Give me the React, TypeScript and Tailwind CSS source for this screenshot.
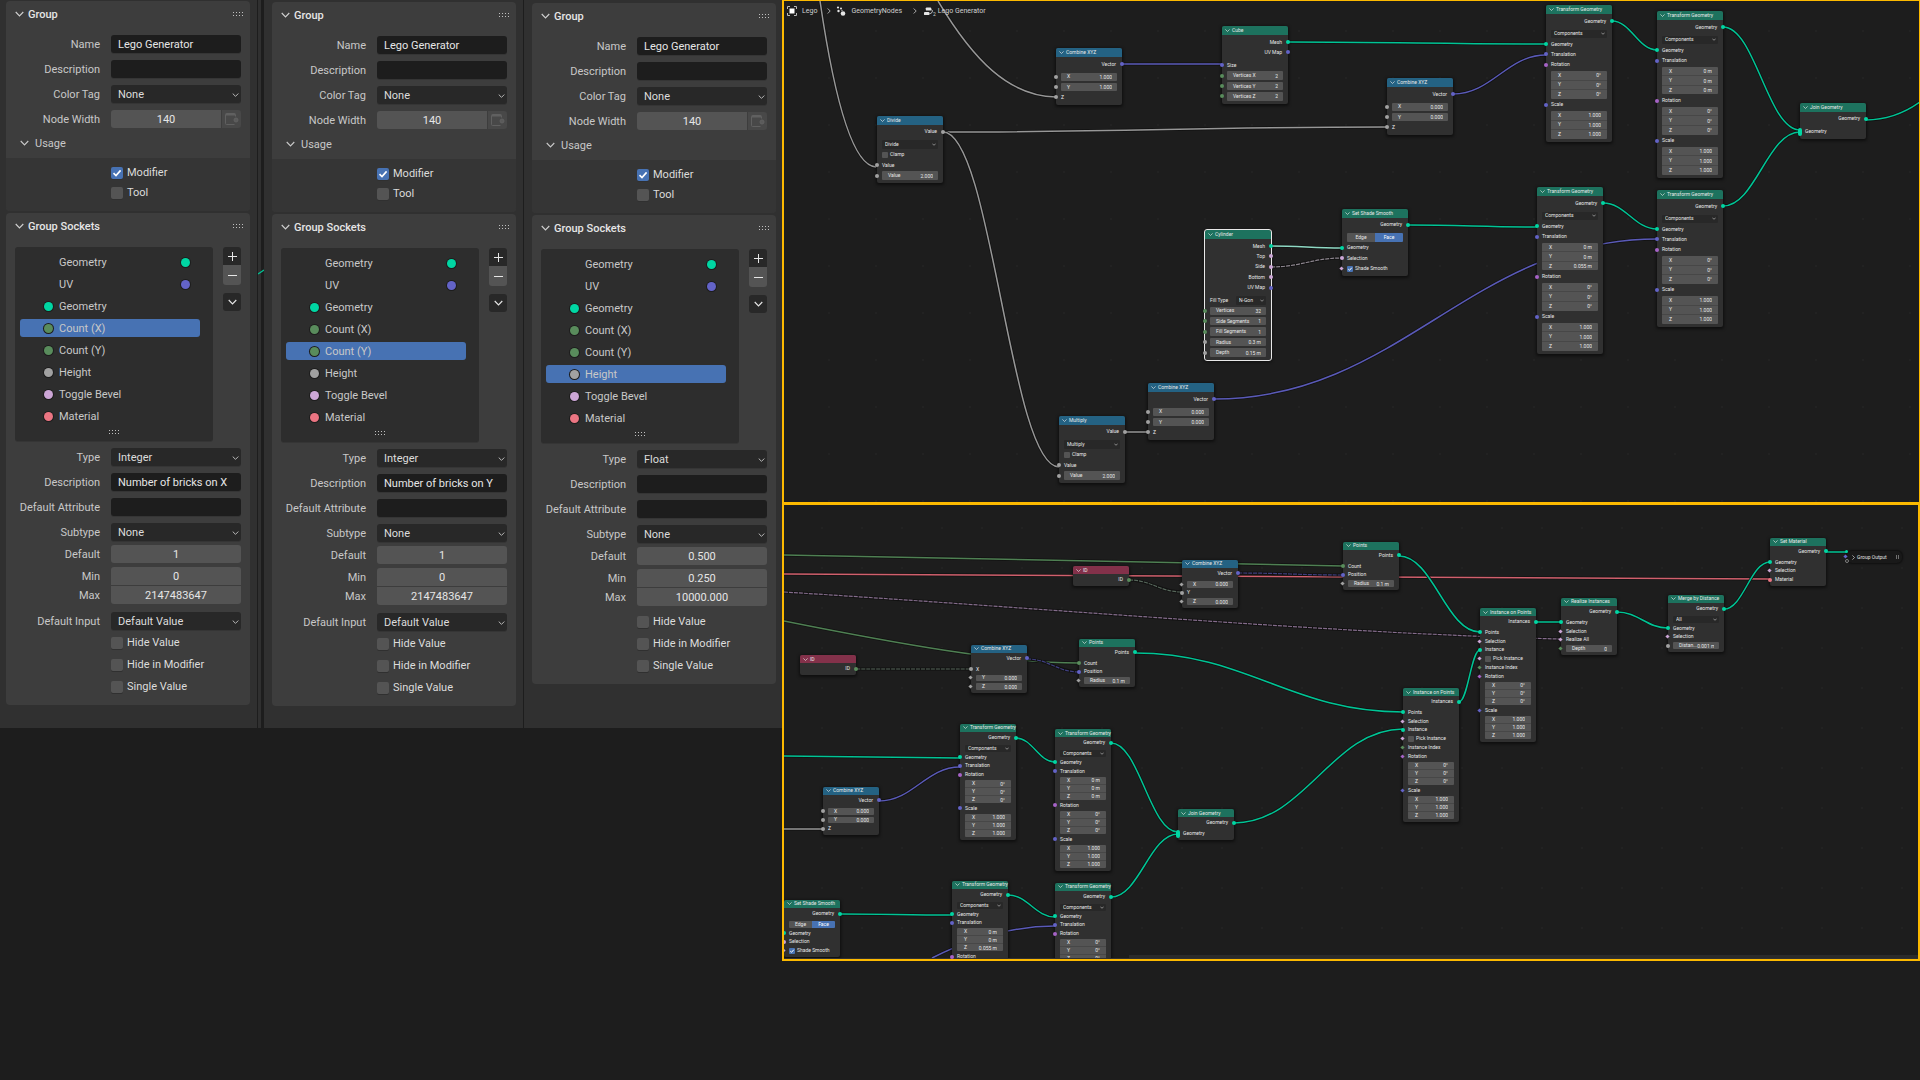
import React from "react";
import clsx from "clsx";

type Sock = "geo" | "vec" | "val" | "int" | "bool" | "rot" | "mat";
type Shape = "dot" | "diamond" | "multi";

type Row =
  | { t: "out"; label: string; s: Sock }
  | { t: "in"; label: string; s: Sock; shape?: Shape }
  | { t: "field"; label: string; value: string; s: Sock; shape?: Shape }
  | { t: "check"; label: string; on?: boolean; s?: Sock; shape?: Shape }
  | { t: "drop"; label?: string; value: string }
  | { t: "toggle" }
  | { t: "block"; values: string[] }
  | { t: "gap" };

type NodeDef = {
  title: string;
  color: "blue" | "green" | "red";
  x: number;
  y: number;
  rows: Row[];
  selected?: boolean;
};

const SOCKET_COLORS: Record<Sock, string> = {
  geo: "bg-[#00d6a3]",
  vec: "bg-[#6363c7]",
  val: "bg-[#a1a1a1]",
  int: "bg-[#598c5c]",
  bool: "bg-[#cca6d6]",
  rot: "bg-[#a663c7]",
  mat: "bg-[#eb7582]",
};

const HEADER_COLORS = {
  blue: "bg-[#246283]",
  green: "bg-[#1d725e]",
  red: "bg-[#83314a]",
};

// Row heights in node units; 140 units is the width of a node.
const UNITS = { row: 22, header: 20, top: 3, gap: 5, block: 63, bottom: 5 };

const Chevron = ({ className }: { className?: string }) => (
  <svg viewBox="0 0 10 6" className={className} fill="none" stroke="currentColor" strokeWidth="1.3">
    <path d="M0.8 0.8 L5 5 L9.2 0.8" />
  </svg>
);

const Dots = () => (
  <svg viewBox="0 0 11 5" className="w-[11px] h-[5px]" fill="#c0c0c0">
    {[0, 3, 6, 9].map((x) => (
      <React.Fragment key={x}>
        <rect x={x} y="0" width="1" height="1" />
        <rect x={x} y="3" width="1" height="1" />
      </React.Fragment>
    ))}
  </svg>
);

/* ---------- Sidebar ---------- */

const FieldRow = ({ label, children }: { label: string; children: React.ReactNode }) => (
  <label className="flex items-center gap-[11px]">
    <span className="w-[94px] shrink-0 text-right text-[#c8c8c8] whitespace-nowrap">{label}</span>
    <span className="relative flex flex-1 h-[18px]">{children}</span>
  </label>
);

const TextBox = ({ value }: { value: string }) => (
  <input
    type="text"
    defaultValue={value}
    className="w-full h-full min-w-0 rounded-[3px] bg-[#1d1d1d] px-[7px] text-[#e6e6e6] shadow-[0_1px_0_#353535] outline-none"
  />
);

const SelectBox = ({ value }: { value: string }) => (
  <>
    <select
      defaultValue={value}
      className="appearance-none w-full h-full rounded-[3px] bg-[#282828] px-[7px] text-[#dcdcdc] shadow-[0_1px_0_#353535] outline-none"
    >
      <option>{value}</option>
    </select>
    <Chevron className="absolute right-[2px] top-[8px] w-[7px] h-[4px] text-[#cfcfcf] pointer-events-none" />
  </>
);

const NumberBox = ({ value, className }: { value: string; className?: string }) => (
  <input
    type="text"
    inputMode="decimal"
    defaultValue={value}
    className={clsx("w-full h-full min-w-0 bg-[#545454] text-center text-[#e6e6e6] outline-none", className || "rounded-[3px]")}
  />
);

const CheckBox = ({ label, on }: { label: string; on?: boolean }) => (
  <label className="flex items-center gap-1 text-[#dcdcdc]">
    <span className="relative w-3 h-3">
      <input
        type="checkbox"
        defaultChecked={on}
        className="block appearance-none w-3 h-3 rounded-[2px] bg-[#545454] checked:bg-[#4772b3] shadow-[0_1px_0_#303030]"
      />
      {on && (
        <svg viewBox="0 0 12 12" className="absolute inset-0 w-3 h-3 pointer-events-none" fill="none" stroke="#fff" strokeWidth="1.6">
          <path d="M2.5 6.2 L5 8.6 L9.6 3.4" />
        </svg>
      )}
    </span>
    {label}
  </label>
);

const PanelHeader = ({ title }: { title: string }) => (
  <div className="flex items-center h-[26px] pl-[9px] pr-[6px]">
    <Chevron className="w-[9px] h-[6px] text-[#cfcfcf]" />
    <h2 className="flex-1 pl-1 font-medium text-[#e6e6e6]">{title}</h2>
    <Dots />
  </div>
);

const SOCKETS: { label: string; s: Sock; out?: boolean }[] = [
  { label: "Geometry", s: "geo", out: true },
  { label: "UV", s: "vec", out: true },
  { label: "Geometry", s: "geo" },
  { label: "Count (X)", s: "int" },
  { label: "Count (Y)", s: "int" },
  { label: "Height", s: "val" },
  { label: "Toggle Bevel", s: "bool" },
  { label: "Material", s: "mat" },
];

type SidebarProps = {
  active: string;
  type: string;
  description: string;
  range: [string, string, string];
  defaultInput?: string;
  className?: string;
};

const Sidebar = ({ active, type, description, range, defaultInput, className }: SidebarProps) => (
  <aside className={clsx("bg-[#303030] pb-[22px]", className)}>
    <section className="w-[244px] rounded-[4px] bg-[#3d3d3d] overflow-hidden">
      <PanelHeader title="Group" />
      <div className="flex flex-col gap-[7px] pt-2 pr-[9px]">
        <FieldRow label="Name"><TextBox value="Lego Generator" /></FieldRow>
        <FieldRow label="Description"><TextBox value="" /></FieldRow>
        <FieldRow label="Color Tag"><SelectBox value="None" /></FieldRow>
        <div className="relative">
          <FieldRow label="Node Width">
            <NumberBox value="140" className="rounded-l-[3px] mr-5" />
          </FieldRow>
          <button type="button" aria-label="Pick width" className="absolute right-0 top-0 w-[19px] h-[18px] rounded-r-[3px] bg-[#484848] flex items-center justify-center">
            <svg viewBox="0 0 15 14" className="w-[15px] h-[14px]" fill="none" stroke="#606060">
              <path d="M11.5 4.5 V2.5 A1 1 0 0 0 10.5 1.5 H2.5 A1 1 0 0 0 1.5 2.5 V11.5 A1 1 0 0 0 2.5 12.5 H10.5" />
              <path d="M2 2.5 H11" strokeWidth="2" />
              <circle cx="12" cy="8" r="2" fill="#5a5a5a" />
            </svg>
          </button>
        </div>
      </div>
      <div className="flex items-center h-[30px] pl-[14px] text-[#c8c8c8]">
        <Chevron className="w-[9px] h-[6px]" />
        <h3 className="pl-[6px]">Usage</h3>
      </div>
      <div className="flex flex-col gap-2 bg-[#353535] pt-[9px] pb-3 pl-[105px] leading-3">
        <CheckBox label="Modifier" on />
        <CheckBox label="Tool" />
      </div>
    </section>

    <section className="mt-[2px] w-[244px] rounded-[4px] bg-[#3d3d3d] pb-[6px]">
      <PanelHeader title="Group Sockets" />
      <div className="flex items-start gap-[10px] pt-2 pl-[9px] pr-[9px]">
        <div className="flex-1 rounded-[3px] bg-[#2d2d2d] pt-1 shadow-[0_1px_0_#353535]">
          <ul>
            {SOCKETS.map((row, i) => (
              <li key={i} className="h-[22px] py-[2px] pl-[5px] pr-[13px]">
                <button
                  type="button"
                  className={clsx(
                    "flex items-center w-full h-full rounded-[3px] pl-[24px] pr-[10px] text-left text-[#c8c8c8]",
                    row.label === active && "bg-[#4772b3]"
                  )}
                >
                  <span className={clsx("w-[9px] h-[9px] rounded-full", !row.out && SOCKET_COLORS[row.s], !row.out && "ring-1 ring-[#1d1d1d]")} />
                  <span className="flex-1 pl-[6px]">{row.label}</span>
                  {row.out && <span className={clsx("w-[9px] h-[9px] rounded-full ring-1 ring-[#1d1d1d]", SOCKET_COLORS[row.s])} />}
                </button>
              </li>
            ))}
          </ul>
          <div className="flex justify-center items-center h-[14px] pb-1"><Dots /></div>
        </div>
        <div className="flex flex-col w-[18px] text-[#e6e6e6]">
          <button type="button" aria-label="Add" className="flex items-center justify-center h-[18px] rounded-t-[3px] bg-[#282828]">
            <svg viewBox="0 0 9 9" className="w-[9px] h-[9px]" stroke="currentColor"><path d="M4.5 0 V9 M0 4.5 H9" /></svg>
          </button>
          <button type="button" aria-label="Remove" className="flex items-center justify-center h-5 rounded-b-[3px] bg-[#545454]">
            <svg viewBox="0 0 9 9" className="w-[9px] h-[9px]" stroke="currentColor"><path d="M0 4.5 H9" /></svg>
          </button>
          <button type="button" aria-label="More" className="mt-2 flex items-center justify-center h-[18px] rounded-[3px] bg-[#282828]">
            <Chevron className="w-[9px] h-[6px]" />
          </button>
        </div>
      </div>

      <div className="flex flex-col gap-[7px] pt-[7px] pr-[9px]">
        <FieldRow label="Type"><SelectBox value={type} /></FieldRow>
        <FieldRow label="Description"><TextBox value={description} /></FieldRow>
        <FieldRow label="Default Attribute"><TextBox value="" /></FieldRow>
        <FieldRow label="Subtype"><SelectBox value="None" /></FieldRow>
      </div>
      <div className="pt-1 pr-[9px]">
        <FieldRow label="Default"><NumberBox value={range[0]} /></FieldRow>
      </div>
      <div className="flex flex-col gap-px pt-1 pr-[9px]">
        <FieldRow label="Min"><NumberBox value={range[1]} className="rounded-t-[3px]" /></FieldRow>
        <FieldRow label="Max"><NumberBox value={range[2]} className="rounded-b-[3px]" /></FieldRow>
      </div>
      {defaultInput && (
        <div className="pt-2 pr-[9px]">
          <FieldRow label="Default Input"><SelectBox value={defaultInput} /></FieldRow>
        </div>
      )}
      <div className={clsx("flex flex-col gap-[10px] pb-[6px] pl-[105px] leading-3", defaultInput ? "pt-[7px]" : "pt-[10px]")}>
        <CheckBox label="Hide Value" />
        <CheckBox label="Hide in Modifier" />
        <CheckBox label="Single Value" />
      </div>
    </section>
  </aside>
);

/* ---------- Node editor ---------- */

const Socket = ({ s, shape, side }: { s: Sock; shape?: Shape; side: "l" | "r" }) => (
  <span
    className={clsx(
      "absolute z-10",
      SOCKET_COLORS[s],
      side === "l" ? "-left-[2px]" : "-right-[2px]",
      shape === "multi" && "w-1 h-2 rounded-[2px]",
      shape === "diamond" && "w-[3px] h-[3px] rotate-45",
      !shape && "w-1 h-1 rounded-full"
    )}
  />
);

const NodeRow = ({ row }: { row: Row }) => {
  const line = "relative grow-22 basis-0 min-h-0 flex items-center";
  switch (row.t) {
    case "gap":
      return <div className="grow-5 basis-0" />;
    case "out":
      return (
        <div className={clsx(line, "justify-end pr-[6px]")}>
          {row.label}
          <Socket s={row.s} side="r" />
        </div>
      );
    case "in":
      return (
        <div className={clsx(line, "pl-[5px]")}>
          <Socket s={row.s} shape={row.shape} side="l" />
          {row.label}
        </div>
      );
    case "field":
      return (
        <div className={clsx(line, "px-[5px]")}>
          <Socket s={row.s} shape={row.shape} side="l" />
          <label className="flex self-stretch items-center w-full my-px rounded-[1px] bg-[#545454] pl-[6px] pr-[5px]">
            <span>{row.label}</span>
            <input defaultValue={row.value} className="block flex-1 w-0 min-w-0 h-[6px] text-right leading-none outline-none" />
          </label>
        </div>
      );
    case "check":
      return (
        <div className={clsx(line, "pl-[5px]")}>
          {row.s && <Socket s={row.s} shape={row.shape} side="l" />}
          <label className="flex items-center gap-[2px]">
            <span className="relative w-[6px] h-[6px]">
              <input type="checkbox" defaultChecked={row.on} className="block appearance-none w-[6px] h-[6px] rounded-[1px] bg-[#545454] checked:bg-[#4772b3]" />
              {row.on && (
                <svg viewBox="0 0 12 12" className="absolute inset-0 w-[6px] h-[6px] pointer-events-none" fill="none" stroke="#fff" strokeWidth="2">
                  <path d="M2.5 6.2 L5 8.6 L9.6 3.4" />
                </svg>
              )}
            </span>
            {row.label}
          </label>
        </div>
      );
    case "drop":
      return (
        <div className={clsx(line, "px-[5px]")}>
          {row.label && <span className="w-[26px] shrink-0">{row.label}</span>}
          <select aria-label={row.label || row.value} defaultValue={row.value} className="appearance-none block self-stretch w-full min-w-0 my-px rounded-[1px] bg-[#282828] pl-[3px] leading-none">
            <option>{row.value}</option>
          </select>
          <Chevron className="absolute right-[7px] w-1 h-[3px] pointer-events-none" />
        </div>
      );
    case "toggle":
      return (
        <div className={clsx(line, "px-[5px]")}>
          <button type="button" className="flex-1 self-stretch my-px rounded-l-[1px] bg-[#545454] leading-none">Edge</button>
          <button type="button" className="flex-1 self-stretch my-px rounded-r-[1px] bg-[#4772b3] leading-none text-white">Face</button>
        </div>
      );
    case "block":
      return (
        <div className="grow-63 basis-0 min-h-0 flex px-[5px]">
          <div className="flex flex-col flex-1 my-px rounded-[1px] overflow-hidden">
            {["X", "Y", "Z"].map((axis, i) => (
              <label key={axis} className={clsx("flex flex-1 min-h-0 items-center bg-[#545454] pl-[7px] pr-[6px]", i > 0 && "border-t border-[#474747]")}>
                <span>{axis}</span>
                <input defaultValue={row.values[i]} className="block flex-1 w-0 min-w-0 h-[6px] text-right leading-none outline-none" />
              </label>
            ))}
          </div>
        </div>
      );
  }
};

const nodeUnits = (rows: Row[]) =>
  rows.reduce(
    (sum, r) => sum + (r.t === "gap" ? UNITS.gap : r.t === "block" ? UNITS.block : UNITS.row),
    UNITS.header + UNITS.top + UNITS.bottom
  );

const GraphNode = ({ node, width }: { node: NodeDef; width: number }) => (
  <article
    className={clsx(
      "absolute flex flex-col rounded-[2px] bg-[#303030] text-[#e8e8e8] whitespace-nowrap shadow-[0_1px_3px_1px_rgba(0,0,0,0.5)]",
      node.selected && "outline outline-[#e8e8e8]"
    )}
    style={{ left: node.x, top: node.y, width, height: Math.round((nodeUnits(node.rows) * width) / 140) }}
  >
    <header className={clsx("grow-20 basis-0 min-h-0 flex items-center gap-[2px] pl-[3px] rounded-t-[2px]", HEADER_COLORS[node.color])}>
      <Chevron className="w-[5px] h-[3px]" />
      {node.title}
    </header>
    <div className="grow-3 basis-0" />
    {node.rows.map((row, i) => (
      <NodeRow key={i} row={row} />
    ))}
    <div className="grow-5 basis-0" />
  </article>
);

const gap: Row = { t: "gap" };
const out = (label: string, s: Sock): Row => ({ t: "out", label, s });
const inp = (label: string, s: Sock, shape?: Shape): Row => ({ t: "in", label, s, shape });
const field = (label: string, value: string, s: Sock, shape?: Shape): Row => ({ t: "field", label, value, s, shape });
const drop = (value: string, label?: string): Row => ({ t: "drop", value, label });
const block = (...values: string[]): Row => ({ t: "block", values });

const DEG = block("0°", "0°", "0°");
const ONE = block("1.000", "1.000", "1.000");

// `visible` limits the rows of a node that runs past the bottom of the editor.
const transform = (x: number, y: number, translation?: Row, visible?: number): NodeDef => ({
  title: "Transform Geometry",
  color: "green",
  x,
  y,
  rows: [
    out("Geometry", "geo"),
    gap,
    drop("Components"),
    inp("Geometry", "geo"),
    inp("Translation", "vec"),
    ...(translation ? [translation] : []),
    inp("Rotation", "rot"),
    DEG,
    inp("Scale", "vec"),
    ONE,
  ].slice(0, visible),
});

// The linked axis shows only its name, the other two keep a field.
const combine = (x: number, y: number, linked: string, value: string, shape?: Shape): NodeDef => ({
  title: "Combine XYZ",
  color: "blue",
  x,
  y,
  rows: [
    out("Vector", "vec"),
    gap,
    ...["X", "Y", "Z"].map((a) => (a === linked ? inp(a, "val") : field(a, value, "val", shape))),
  ],
});

const math = (title: string, x: number, y: number): NodeDef => ({
  title,
  color: "blue",
  x,
  y,
  rows: [out("Value", "val"), gap, drop(title), { t: "check", label: "Clamp" }, inp("Value", "val"), field("Value", "2.000", "val")],
});

const join = (x: number, y: number): NodeDef => ({
  title: "Join Geometry",
  color: "green",
  x,
  y,
  rows: [out("Geometry", "geo"), gap, inp("Geometry", "geo", "multi")],
});

const shadeSmooth = (x: number, y: number): NodeDef => ({
  title: "Set Shade Smooth",
  color: "green",
  x,
  y,
  rows: [
    out("Geometry", "geo"),
    gap,
    { t: "toggle" },
    inp("Geometry", "geo"),
    inp("Selection", "bool"),
    { t: "check", label: "Shade Smooth", on: true, s: "bool", shape: "diamond" },
  ],
});

const idNode = (x: number, y: number): NodeDef => ({ title: "ID", color: "red", x, y, rows: [out("ID", "int")] });

const points = (x: number, y: number): NodeDef => ({
  title: "Points",
  color: "green",
  x,
  y,
  rows: [out("Points", "geo"), gap, inp("Count", "int"), inp("Position", "vec"), field("Radius", "0.1 m", "val", "diamond")],
});

const instance = (x: number, y: number): NodeDef => ({
  title: "Instance on Points",
  color: "green",
  x,
  y,
  rows: [
    out("Instances", "geo"),
    gap,
    inp("Points", "geo"),
    inp("Selection", "bool", "diamond"),
    inp("Instance", "geo"),
    { t: "check", label: "Pick Instance", s: "bool", shape: "diamond" },
    inp("Instance Index", "int", "diamond"),
    inp("Rotation", "rot", "diamond"),
    DEG,
    inp("Scale", "vec", "diamond"),
    ONE,
  ],
});

const TOP_NODES: NodeDef[] = [
  combine(272, 47, "Z", "1.000"),
  {
    title: "Cube",
    color: "green",
    x: 438,
    y: 25,
    rows: [
      out("Mesh", "geo"),
      out("UV Map", "vec"),
      gap,
      inp("Size", "vec"),
      field("Vertices X", "2", "int"),
      field("Vertices Y", "2", "int"),
      field("Vertices Z", "2", "int"),
    ],
  },
  math("Divide", 93, 115),
  {
    title: "Cylinder",
    color: "green",
    x: 421,
    y: 229,
    selected: true,
    rows: [
      out("Mesh", "geo"),
      out("Top", "bool"),
      out("Side", "bool"),
      out("Bottom", "bool"),
      out("UV Map", "vec"),
      gap,
      drop("N-Gon", "Fill Type"),
      field("Vertices", "32", "int"),
      field("Side Segments", "1", "int"),
      field("Fill Segments", "1", "int"),
      field("Radius", "0.3 m", "val"),
      field("Depth", "0.15 m", "val"),
    ],
  },
  shadeSmooth(558, 208),
  combine(603, 77, "Z", "0.000"),
  transform(762, 4),
  transform(873, 10, block("0 m", "0 m", "0 m")),
  join(1016, 102),
  transform(753, 186, block("0 m", "0 m", "0.055 m")),
  transform(873, 189),
  combine(364, 382, "Z", "0.000"),
  math("Multiply", 275, 415),
];

const BOTTOM_NODES: NodeDef[] = [
  idNode(289, 61),
  combine(398, 55, "Y", "0.000", "diamond"),
  points(559, 37),
  idNode(16, 150),
  combine(187, 140, "X", "0.000", "diamond"),
  points(295, 134),
  instance(696, 103),
  instance(619, 183),
  {
    title: "Realize Instances",
    color: "green",
    x: 777,
    y: 93,
    rows: [
      out("Geometry", "geo"),
      gap,
      inp("Geometry", "geo"),
      inp("Selection", "bool", "diamond"),
      inp("Realize All", "bool", "diamond"),
      field("Depth", "0", "int", "diamond"),
    ],
  },
  {
    title: "Merge by Distance",
    color: "green",
    x: 884,
    y: 90,
    rows: [
      out("Geometry", "geo"),
      gap,
      drop("All"),
      inp("Geometry", "geo"),
      inp("Selection", "bool", "diamond"),
      field("Distan...", "0.001 m", "val"),
    ],
  },
  {
    title: "Set Material",
    color: "green",
    x: 986,
    y: 33,
    rows: [out("Geometry", "geo"), gap, inp("Geometry", "geo"), inp("Selection", "bool", "diamond"), inp("Material", "mat")],
  },
  transform(176, 219),
  transform(271, 224, block("0 m", "0 m", "0 m")),
  combine(39, 282, "Z", "0.000"),
  join(394, 304),
  transform(168, 376, block("0 m", "0 m", "0.055 m"), 7),
  transform(271, 378, undefined, 7),
  shadeSmooth(0, 395),
];

type Wire = { d: string; c: string; dash?: boolean };

const link = (x1: number, y1: number, x2: number, y2: number, c: string, dash?: boolean): Wire => {
  const h = (x2 - x1) * 0.42;
  return { d: `M${x1} ${y1} C${x1 + h} ${y1} ${x2 - h} ${y2} ${x2} ${y2}`, c, dash };
};

const GEO = "#00c495";
const VEC = "#5a5ab8";
const VAL = "#979797";
const INT = "#4f8053";
const BOOL = "#846c8b";
const MAT = "#d1606d";

const TOP_WIRES: Wire[] = [
  { d: "M36 0 C47 75 65 165 92 166", c: VAL },
  { d: "M154 0 C190 60 225 95 272 96", c: VAL },
  link(159, 131, 603, 126, VAL),
  link(159, 131, 275, 466, VAL),
  link(338, 63, 438, 63, VEC),
  link(504, 41, 762, 43, GEO),
  link(669, 93, 762, 54, VEC),
  link(828, 20, 873, 49, GEO),
  link(939, 26, 1016, 129, GEO),
  link(939, 205, 1016, 131, GEO),
  link(819, 202, 873, 228, GEO),
  { d: "M1082 119 C1105 119 1122 111 1136 101", c: GEO },
  link(487, 245, 558, 247, "#8fd9c4"),
  link(487, 266, 558, 257, "#8c858e", true),
  link(624, 224, 753, 226, GEO),
  link(430, 398, 873, 238, VEC),
  link(341, 431, 364, 431, VAL),
];

const BOTTOM_WIRES: Wire[] = [
  { d: "M0 50 L559 61", c: INT },
  { d: "M0 69 L986 74", c: MAT },
  { d: "M0 87 C260 103 540 128 776 134", c: BOOL, dash: true },
  { d: "M0 116 C110 138 220 158 295 158", c: INT },
  link(345, 75, 398, 87, "#56665a", true),
  link(454, 68, 559, 70, "#3f3f80", true),
  link(72, 164, 187, 164, "#56665a", true),
  link(243, 154, 295, 167, "#3f3f80", true),
  link(351, 148, 619, 207, GEO),
  link(615, 51, 696, 127, GEO),
  link(675, 197, 696, 145, GEO),
  link(450, 318, 619, 224, GEO),
  link(752, 117, 777, 117, GEO),
  link(833, 107, 884, 123, GEO),
  link(940, 104, 986, 57, GEO),
  link(1042, 47, 1063, 47, GEO),
  { d: "M0 251 L176 253", c: GEO },
  { d: "M0 324 L39 324", c: VAL },
  link(95, 296, 176, 262, VEC),
  link(232, 233, 271, 257, GEO),
  link(327, 238, 394, 327, GEO),
  link(327, 392, 394, 329, GEO),
  link(224, 390, 271, 412, GEO),
  link(56, 409, 168, 410, GEO),
  { d: "M148 453 C190 432 230 421 271 421", c: VEC },
];

type CanvasProps = {
  id: string;
  grid: number;
  wires: Wire[];
  nodes: NodeDef[];
  width: number;
};

const Canvas = ({ id, grid, wires, nodes, width }: CanvasProps) => (
  <>
    <svg className="absolute inset-0 w-full h-full" fill="none">
      <defs>
        <pattern id={id} x="3" y="3" width={grid} height={grid} patternUnits="userSpaceOnUse">
          <circle cx={grid - 5} cy={grid - 20} r="1" fill="#242424" />
        </pattern>
      </defs>
      <rect width="100%" height="100%" fill={`url(#${id})`} />
      {wires.map((w, i) => (
        <g key={i}>
          <path d={w.d} stroke="#111" strokeWidth="3" />
          <path d={w.d} stroke={w.c} strokeWidth={w.dash ? 1.2 : 1.5} strokeDasharray={w.dash ? "4 1" : undefined} />
        </g>
      ))}
    </svg>
    {nodes.map((n, i) => (
      <GraphNode key={i} node={n} width={width} />
    ))}
  </>
);

const Crumbs = () => (
  <nav className="relative z-10 flex items-center h-5 pl-[3px] text-[7px] text-[#d0d0d0]">
    <svg viewBox="0 0 10 10" className="w-[10px] h-[10px]" fill="none" stroke="#bbb">
      <rect x="2.5" y="2.5" width="5" height="5" fill="#fff" stroke="none" />
      <path d="M0.5 3 V0.5 H3 M7 0.5 H9.5 V3 M9.5 7 V9.5 H7 M3 9.5 H0.5 V7" />
    </svg>
    <a href="#lego" className="pl-[5px]">Lego</a>
    <Chevron className="ml-[9px] w-[6px] h-1 -rotate-90" />
    <svg viewBox="0 0 10 10" className="ml-1 w-[10px] h-[10px]" fill="#e6e6e6">
      <circle cx="7" cy="7.5" r="2.3" />
      <circle cx="2" cy="1.5" r="1.1" />
      <circle cx="5" cy="2.5" r="1" />
      <circle cx="2.5" cy="5" r="1.2" />
      <circle cx="6" cy="4.3" r="0.6" />
    </svg>
    <a href="#geometry-nodes" className="pl-[5px]">GeometryNodes</a>
    <Chevron className="ml-[10px] w-[6px] h-1 -rotate-90" />
    <svg viewBox="0 0 10 10" className="ml-[6px] w-[9px] h-[9px]" fill="#e6e6e6">
      <rect x="2" y="0.5" width="6" height="3.5" rx="1" />
      <rect x="0" y="5.5" width="6" height="3.5" rx="1" />
      <path d="M8 3 C10 3 10 7 6 7.5" fill="none" stroke="#e6e6e6" />
    </svg>
    <span className="self-end text-[5px] leading-none pb-1">2</span>
    <a href="#lego-generator" className="pl-[2px]">Lego Generator</a>
  </nav>
);

const GroupOutput = () => (
  <div className="absolute left-[1063px] top-[46px] w-[55px] h-3 flex items-center justify-between rounded-[5px] bg-[#191919] pl-1 pr-[3px] text-[#e0e0e0] whitespace-nowrap shadow-[0_0_2px_1px_rgba(0,0,0,0.5)]">
    <span className="absolute -left-[2px] -top-[1px] w-[3px] h-[3px] rounded-full bg-[#00d6a3]" />
    <span className="absolute -left-[3px] top-[4px] w-[3px] h-[3px] rotate-45 bg-[#6363c7]" />
    <span className="absolute -left-[2px] top-[8px] w-1 h-1 rounded-full border border-[#808080]" />
    <Chevron className="w-[5px] h-[3px] -rotate-90" />
    <span className="flex-1 pl-px">Group Output</span>
    <span className="w-[3px] h-1 border-x border-[#707070]" />
  </div>
);

export default function App() {
  return (
    <div className="min-h-screen bg-[#1d1d1d] flex items-start font-['Roboto','Inter',sans-serif] text-[11px] leading-none">
      <div className="flex shrink-0">
        <Sidebar
          className="w-[257px] pt-px pl-[6px]"
          active="Count (X)"
          type="Integer"
          description="Number of bricks on X"
          range={["1", "0", "2147483647"]}
          defaultInput="Default Value"
        />
        {/* sliver of the node editor between the two regions */}
        <div className="relative w-[7px] bg-[#303030] border-l border-r-3 border-[#1d1d1d]">
          <svg className="absolute top-[269px] left-0 w-[6px] h-[6px]" viewBox="0 0 6 6"><path d="M0 5 L6 1" stroke={GEO} strokeWidth="1.4" /></svg>
        </div>
        <Sidebar
          className="w-[259px] pt-[2px] pl-2"
          active="Count (Y)"
          type="Integer"
          description="Number of bricks on Y"
          range={["1", "0", "2147483647"]}
          defaultInput="Default Value"
        />
        <Sidebar
          className="w-[259px] pt-[3px] pl-2 border-l border-[#1d1d1d]"
          active="Height"
          type="Float"
          description=""
          range={["0.500", "0.250", "10000.000"]}
        />
      </div>

      <main className="flex-1 min-w-0 text-[5px]">
        <section className="relative h-[502px] overflow-hidden border-l-2 border-t border-r border-[#fcb900]">
          <Crumbs />
          <Canvas id="grid-top" grid={47} wires={TOP_WIRES} nodes={TOP_NODES} width={66} />
        </section>
        <section className="relative h-[459px] overflow-hidden border-l-2 border-t-3 border-r-2 border-b-2 border-[#fcb900]">
          <Canvas id="grid-bottom" grid={40} wires={BOTTOM_WIRES} nodes={BOTTOM_NODES} width={56} />
          <GroupOutput />
          <div className="absolute right-0 bottom-0 left-0 h-px bg-[#303030]" />
          <div className="absolute right-0 bottom-px left-[345px] h-[3px] bg-[#2b2b2b]" />
        </section>
      </main>
    </div>
  );
}
